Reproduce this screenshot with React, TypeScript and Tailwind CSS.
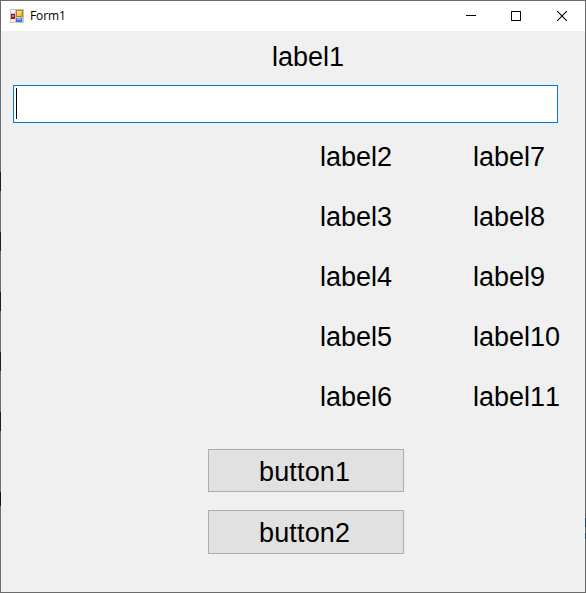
import React from "react";

const leftLabels = ["label2", "label3", "label4", "label5", "label6"];
const rightLabels = ["label7", "label8", "label9", "label10", "label11"];

function FormIcon() {
  return (
    <svg width="14" height="14" viewBox="0 0 14 14" className="ml-[9px] shrink-0" shapeRendering="crispEdges">
      <defs>
        <linearGradient id="gold" x1="0" y1="0" x2="1" y2="1">
          <stop offset="0" stopColor="#ffec9c" />
          <stop offset="1" stopColor="#efb01c" />
        </linearGradient>
      </defs>
      <rect width="14" height="14" fill="#c3c3c3" />
      <rect x="1" y="1" width="4" height="3" fill="#f4f4f4" />
      <rect x="1" y="10" width="4" height="3" fill="#f4f4f4" />
      <rect x="1" y="5" width="4" height="5" fill="#9c1616" />
      <rect x="2" y="6" width="2" height="2" fill="#e07a6c" />
      <rect x="6" y="1" width="7" height="7" fill="#b8841a" />
      <rect x="7" y="2" width="5" height="5" fill="url(#gold)" />
      <rect x="6" y="9" width="6" height="4" fill="#3f78d6" />
      <rect x="7" y="9" width="4" height="2" fill="#7db0f5" />
    </svg>
  );
}

function TitleBar() {
  return (
    <header className="flex h-[30px] shrink-0 items-center bg-white">
      <FormIcon />
      <span className="ml-[6px] font-['Open_Sans','Noto_Sans',sans-serif] text-[12px] leading-[16px] tracking-[-0.1px] text-black">
        Form1
      </span>
      <div className="ml-auto flex h-full">
        <div className="flex w-[44px] items-center justify-center">
          <svg width="10" height="10" viewBox="0 0 10 10" shapeRendering="crispEdges">
            <path d="M0 4h10v1H0z" />
          </svg>
        </div>
        <div className="flex w-[46px] items-center justify-center">
          <svg width="10" height="10" viewBox="0 0 10 10" shapeRendering="crispEdges">
            <rect x=".5" y=".5" width="9" height="9" fill="none" stroke="#000" />
          </svg>
        </div>
        <div className="flex w-[46px] items-center justify-center">
          <svg width="10" height="10" viewBox="0 0 10 10">
            <path d="M0 0 10 10M10 0 0 10" fill="none" stroke="#000" strokeWidth="1.1" />
          </svg>
        </div>
      </div>
    </header>
  );
}

function LabelColumn({ labels }: { labels: string[] }) {
  return (
    <div className="flex flex-col gap-[30px]">
      {labels.map((label) => (
        <span key={label}>{label}</span>
      ))}
    </div>
  );
}

/* Backdrop tints showing through the translucent window frame. */
function FrameTints() {
  return (
    <>
      <div className="absolute top-[171px] -left-px flex w-px flex-col gap-[41px]">
        {leftLabels.map((label) => (
          <div key={label} className="h-[19px] bg-[#1e1a33]" />
        ))}
      </div>
      <div className="absolute top-[491px] -left-px h-[14px] w-px bg-[#161616]" />
      <div className="absolute top-[517px] -right-px h-[9px] w-px bg-[#124a70]" />
      <div className="absolute top-[532px] -right-px h-[6px] w-px bg-[#124a70]" />
    </>
  );
}

export default function App() {
  return (
    <div className="relative flex h-[593px] w-[586px] flex-col border border-[#6b6b6b] bg-[#f0f0f0]">
      <TitleBar />
      <main className="flex flex-col font-['Liberation_Sans',Arial,sans-serif] text-[27px] leading-[30px] text-black [font-kerning:none]">
        <span className="mt-[11px] ml-[271px]">label1</span>
        <div className="mt-[13px] ml-[12px] flex h-[38px] w-[545px] border border-[#0078d7] bg-white pt-[2px] pl-[2px]">
          <div className="h-[31px] w-px bg-black" />
        </div>
        <div className="mt-[19px] ml-[319px] grid grid-cols-[153px_auto]">
          <LabelColumn labels={leftLabels} />
          <LabelColumn labels={rightLabels} />
        </div>
        <button className="mt-[37px] ml-[207px] flex h-[43px] w-[196px] border border-[#adadad] bg-[#e1e1e1] pt-[7px] pl-[50px] tracking-[0.15px]">
          button1
        </button>
        <button className="mt-[18px] ml-[207px] flex h-[44px] w-[196px] border border-[#adadad] bg-[#e1e1e1] pt-[7px] pl-[50px] tracking-[0.15px]">
          button2
        </button>
      </main>
      <FrameTints />
    </div>
  );
}
